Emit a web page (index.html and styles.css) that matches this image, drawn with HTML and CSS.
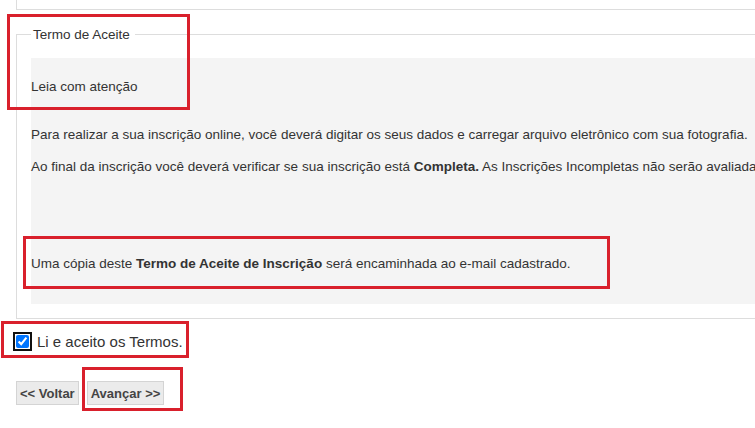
FILE: index.html
```html
<!DOCTYPE html>
<html lang="pt-BR">
<head>
    <meta charset="UTF-8">
    <title>Inscrição - Termo de Aceite</title>
    <link rel="stylesheet" href="styles.css">
</head>
<body>
    <div class="page">
        <div class="prev-box"></div>

        <fieldset class="terms-box">
            <legend>Termo de Aceite</legend>
            <div class="terms">
                <p class="intro">Leia com atenção</p>
                <p>Para realizar a sua inscrição online, você deverá digitar os seus dados e carregar arquivo eletrônico com sua fotografia.</p>
                <p class="spaced">Ao final da inscrição você deverá verificar se sua inscrição está <b>Completa.</b> As Inscrições Incompletas não serão avaliadas.</p>
                <p>Uma cópia deste <b>Termo de Aceite de Inscrição</b> será encaminhada ao e-mail cadastrado.</p>
            </div>
        </fieldset>

        <div class="accept">
            <input type="checkbox" id="aceite" checked>
            <label for="aceite">Li e aceito os Termos.</label>
        </div>

        <div class="actions">
            <button type="button">&lt;&lt; Voltar</button>
            <button type="button">Avançar &gt;&gt;</button>
        </div>

        <!-- marcações em vermelho -->
        <div class="mark mark-title"></div>
        <div class="mark mark-copy"></div>
        <div class="mark mark-check"></div>
        <div class="mark mark-next"></div>
    </div>
</body>
</html>
```

FILE: styles.css
```css
body {
    margin: 0;
    overflow: hidden;
    background: #fff;
    font-family: "Liberation Sans", Arial, sans-serif;
    font-size: 13.5px;
    color: #333;
}

.page {
    position: relative;
    width: 820px;
    height: 428px;
}

.prev-box {
    margin-left: 16px;
    height: 9px;
    border-left: 1px solid #ddd;
    border-bottom: 1px solid #ddd;
}

.terms-box {
    margin: 17px 0 0 16px;
    padding: 16px 0 14px 14px;
    border: 1px solid #ddd;
    border-right: none;
}

.terms-box legend {
    padding: 0 5px 0 2px;
    margin-left: 0;
    line-height: 15px;
}

.terms {
    background: #f4f4f4;
    padding: 20px 0 31px;
}

.terms p {
    margin: 0 0 14px;
    line-height: 18px;
}

.terms p.intro {
    margin-bottom: 30px;
}

.terms p.spaced {
    margin-bottom: 79px;
}

.terms p:last-child {
    margin-bottom: 0;
}

.accept {
    display: flex;
    align-items: center;
    margin: 14px 0 0 16px;
    font-size: 15px;
}

.accept input {
    width: 13px;
    height: 13px;
    margin: 0 8px 0 0;
    accent-color: #0075ff;
    outline: 2px solid #101010;
    outline-offset: 1px;
    border-radius: 2px;
}

.actions {
    display: flex;
    gap: 8px;
    margin: 31px 0 0 16px;
}

.actions button {
    height: 24px;
    padding: 0 3px;
    font-family: inherit;
    font-size: 13px;
    font-weight: bold;
    color: #444;
    background: #ebebeb;
    border: 1px solid #d4d4d4;
}

.mark {
    position: absolute;
    border: 3px solid #d9202c;
}

.mark-title {
    left: 7px;
    top: 14px;
    width: 177px;
    height: 90px;
}

.mark-copy {
    left: 23px;
    top: 236px;
    width: 581px;
    height: 47px;
}

.mark-check {
    left: 1px;
    top: 321px;
    width: 182px;
    height: 31px;
}

.mark-next {
    left: 82px;
    top: 367px;
    width: 95px;
    height: 38px;
}
```
